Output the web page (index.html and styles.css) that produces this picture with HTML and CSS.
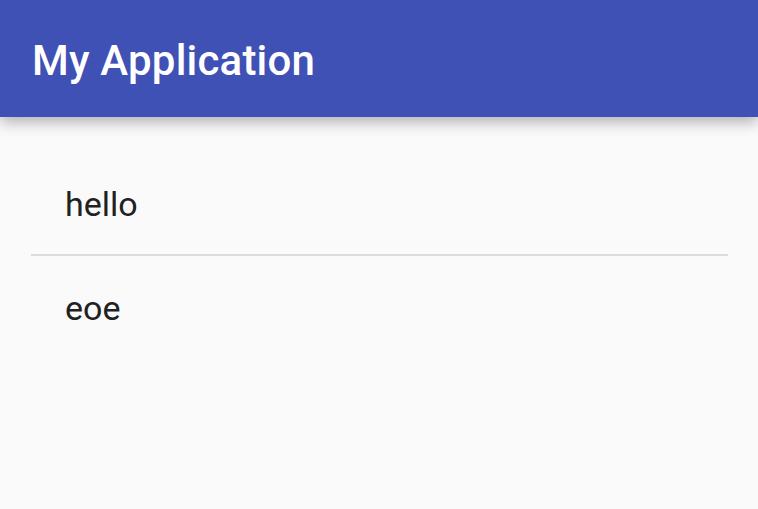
FILE: index.html
```html
<!DOCTYPE html>
<html lang="en">
<head>
    <meta charset="UTF-8">
    <meta name="viewport" content="width=device-width, initial-scale=1.0">
    <title>My Application</title>
    <link rel="stylesheet" href="styles.css">
</head>
<body>

<div class="app-bar">
    <h1 class="app-title">My Application</h1>
</div>

<ul class="item-list">
    <li class="item">hello</li>
    <li class="item">eoe</li>
</ul>

</body>
</html>
```

FILE: styles.css
```css
body {
    background-color: #fafafa;
    font-family: Roboto, "Noto Sans", sans-serif;
    margin: 0;
    padding: 0;
    overflow: hidden;
}
.app-bar {
    height: 117px;
    box-sizing: border-box;
    background-color: #3f51b5;
    display: flex;
    align-items: center;
    padding: 4px 32px 0 32px;
    box-shadow: 0 5px 14px rgba(0, 0, 0, 0.3);
    position: relative;
    z-index: 1;
}
.app-title {
    margin: 0;
    color: #ffffff;
    font-size: 42px;
    font-weight: 500;
    letter-spacing: 0.2px;
}
.item-list {
    list-style: none;
    margin: 0;
    padding: 35px 30px 0 31px;
}
.item {
    height: 102px;
    display: flex;
    align-items: center;
    padding-left: 34px;
    padding-top: 2px;
    box-sizing: border-box;
    font-size: 34px;
    color: #212121;
}
.item + .item {
    height: 104px;
    border-top: 2px solid #dcdcdc;
}
```
